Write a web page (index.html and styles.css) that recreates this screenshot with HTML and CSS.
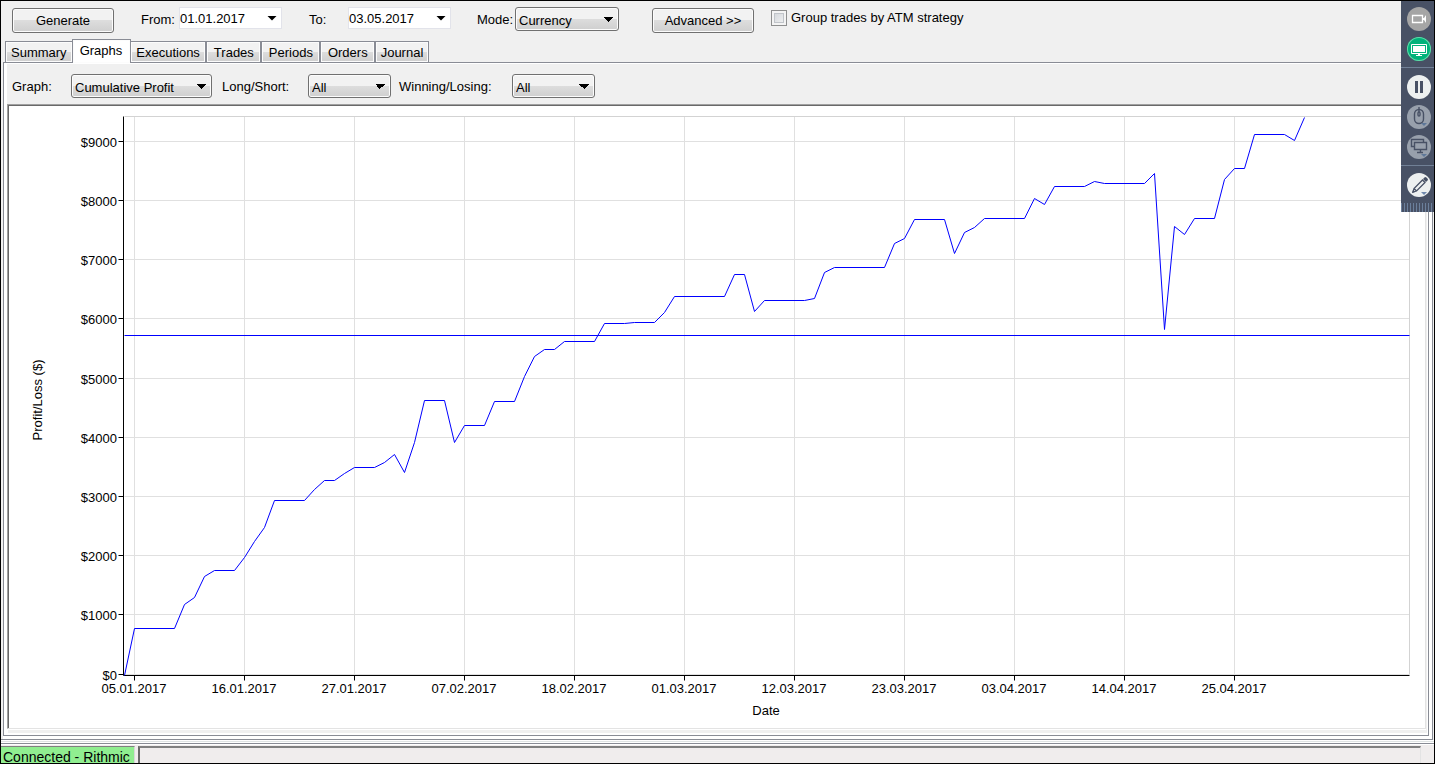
FILE: index.html
```html
<!DOCTYPE html>
<html lang="en">

<head>
  <meta charset="UTF-8">
  <meta name="viewport" content="width=device-width, initial-scale=1.0">
  <title>Account Performance</title>
  <link rel="stylesheet" href="styles.css">
</head>

<body>
  <div class="window">
    <form class="toolbar">
      <button type="button" class="btn">Generate</button>
      <label class="from-label" for="from">From:</label>
      <div class="date">
        <input type="text" id="from" value="01.01.2017">
        <button type="button" class="drop" aria-label="Open from date"></button>
      </div>
      <label class="to-label" for="to">To:</label>
      <div class="date">
        <input type="text" id="to" value="03.05.2017">
        <button type="button" class="drop" aria-label="Open to date"></button>
      </div>
      <label class="mode-label" for="mode">Mode:</label>
      <select id="mode" class="select-mode">
        <option>Currency</option>
        <option>Percent</option>
        <option>Points</option>
      </select>
      <button type="button" class="btn advanced">Advanced &gt;&gt;</button>
      <label class="check"><input type="checkbox"> Group trades by ATM strategy</label>
    </form>

    <nav class="tabs">
      <button type="button" class="tab">Summary</button>
      <button type="button" class="tab active">Graphs</button>
      <button type="button" class="tab">Executions</button>
      <button type="button" class="tab wide">Trades</button>
      <button type="button" class="tab wide">Periods</button>
      <button type="button" class="tab wide">Orders</button>
      <button type="button" class="tab">Journal</button>
    </nav>

    <main class="report">
      <div class="page">
        <form class="filters">
          <label class="graph-label" for="graph">Graph:</label>
          <select id="graph" class="select-graph">
            <option>Cumulative Profit</option>
            <option>Drawdown</option>
          </select>
          <label class="side-label" for="side">Long/Short:</label>
          <select id="side" class="select-all">
            <option>All</option>
            <option>Long</option>
            <option>Short</option>
          </select>
          <label class="result-label" for="result">Winning/Losing:</label>
          <select id="result" class="select-all">
            <option>All</option>
            <option>Winning</option>
            <option>Losing</option>
          </select>
        </form>

        <div class="panel">
          <svg class="chart" viewBox="9 106 1416 622" role="img" aria-label="Cumulative profit by date">
            <g transform="translate(.5 .5)">
              <path class="grid" d="M124 141H1409M124 200H1409M124 259H1409M124 318H1409M124 378H1409M124 437H1409M124 496H1409M124 555H1409M124 614H1409M124 674H1409" />
              <path class="grid" d="M134 116V674M244 116V674M354 116V674M464 116V674M574 116V674M684 116V674M794 116V674M904 116V674M1014 116V674M1124 116V674M1234 116V674" />
              <path class="frame" d="M124 116H1409V674" />
              <path class="axis" d="M123 116V675H1409" />
              <path class="axis" d="M118 141H123M118 200H123M118 259H123M118 318H123M118 378H123M118 437H123M118 496H123M118 555H123M118 614H123M118 674H123" />
              <path class="axis" d="M134 675V680M244 675V680M354 675V680M464 675V680M574 675V680M684 675V680M794 675V680M904 675V680M1014 675V680M1124 675V680M1234 675V680" />
              <path class="profit" d="M124 335H1409" />
              <polyline class="profit" points="124,675 134,628 174,628 184,604 194,597 204,576 214,570 234,570 244,557 254,541 264,527 274,500 304,500 314,489 324,480 334,480 344,473 354,467 374,467 384,462 394,454 404,472 414,442 424,400 444,400 454,442 464,425 484,425 494,401 514,401 524,376 534,356 544,349 554,349 564,341 594,341 604,323 624,323 634,322 654,322 664,312 674,296 724,296 734,274 744,274 754,311 764,300 804,300 814,298 824,272 834,267 884,267 894,243 904,238 914,219 944,219 954,253 964,232 974,227 984,218 1024,218 1034,198 1044,204 1054,186 1084,186 1094,181 1104,183 1144,183 1154,173 1164,329 1174,226 1184,234 1194,218 1214,218 1224,179 1234,168 1244,168 1254,134 1284,134 1294,140 1304,117" />
            </g>
            <g class="y-labels">
              <text x="117" y="147">$9000</text>
              <text x="117" y="206">$8000</text>
              <text x="117" y="265">$7000</text>
              <text x="117" y="324">$6000</text>
              <text x="117" y="384">$5000</text>
              <text x="117" y="443">$4000</text>
              <text x="117" y="502">$3000</text>
              <text x="117" y="561">$2000</text>
              <text x="117" y="620">$1000</text>
              <text x="117" y="680">$0</text>
            </g>
            <g class="x-labels">
              <text x="134" y="693">05.01.2017</text>
              <text x="244" y="693">16.01.2017</text>
              <text x="354" y="693">27.01.2017</text>
              <text x="464" y="693">07.02.2017</text>
              <text x="574" y="693">18.02.2017</text>
              <text x="684" y="693">01.03.2017</text>
              <text x="794" y="693">12.03.2017</text>
              <text x="904" y="693">23.03.2017</text>
              <text x="1014" y="693">03.04.2017</text>
              <text x="1124" y="693">14.04.2017</text>
              <text x="1234" y="693">25.04.2017</text>
              <text x="766" y="715">Date</text>
              <text transform="translate(42 400) rotate(-90)">Profit/Loss ($)</text>
            </g>
          </svg>
        </div>
      </div>
    </main>

    <footer class="status">
      <span class="connected">Connected - Rithmic</span>
      <span class="message"></span>
    </footer>

    <!-- floating share bar -->
    <aside class="share">
      <button type="button" class="round muted" aria-label="Camera">
        <svg viewBox="0 0 24 24"><path d="M5.500 8.500H15.500V15.500H5.500Z" fill="none" stroke="#fff" stroke-width="1.300" /><path d="M16 11L17 11L19 8V16L17 13L16 13Z" fill="#fff" /></svg>
      </button>
      <button type="button" class="round screen" aria-label="Share screen">
        <svg viewBox="0 0 24 24"><path d="M4.500 7.500H19.500V16.500H4.500Z" fill="none" stroke="#fff" /><path d="M6 9H18V15H6ZM11 17H13V18H15V19H9V18H11Z" fill="#fff" /></svg>
      </button>
      <hr>
      <button type="button" class="round light" aria-label="Pause">
        <svg viewBox="0 0 24 24"><path d="M8 6H11V18H8ZM13 6H16V18H13Z" fill="#485165" /></svg>
      </button>
      <button type="button" class="round dim" aria-label="Mouse control">
        <svg viewBox="0 0 24 24"><g fill="none" stroke="#485165" stroke-width="1.400"><rect x="7.500" y="4.500" width="9" height="14" rx="4.500" /><path d="M12 2V7" /><rect x="11" y="7" width="2" height="4" rx="1" /></g><path d="M14 18H20L17 21Z" fill="#5f7899" /></svg>
      </button>
      <button type="button" class="round dim" aria-label="Monitors">
        <svg viewBox="0 0 24 24"><g fill="none" stroke="#485165" stroke-width="1.400"><path d="M7 11.500H4.500V4.500H16.500V7" /><path d="M7.500 7.500H19.500V14.500H7.500ZM13.500 15V17M10 17.500H16" /></g><path d="M14 19H20L17 22Z" fill="#5f7899" /></svg>
      </button>
      <hr>
      <button type="button" class="round light" aria-label="Draw">
        <svg viewBox="0 0 24 24"><path d="M6 19L7 15.500L15.500 7L18 9.500L9.500 18ZM7 15.500L9.500 18" fill="none" stroke="#485165" stroke-width="1.300" /><path d="M16 6L18 4Q19 4 20 5Q21 6 21 7L19 9ZM5 20L6 17L8 19Z" fill="#485165" /><path d="M14 19H20L17 22Z" fill="#7089ad" /></svg>
      </button>
      <div class="grip"></div>
    </aside>
  </div>
</body>

</html>
```
FILE: styles.css
```css
* {
  box-sizing: border-box;
}

body {
  margin: 0;
  font-family: "Liberation Sans", Arial, sans-serif;
  font-size: 13px;
  color: #000;
}

button,
input,
select {
  font: inherit;
  color: inherit;
}

.window {
  position: relative;
  display: flex;
  flex-direction: column;
  min-height: 100vh;
  border: 1px solid #000;
  background: #f0f0f0;
}

/* top row */
.toolbar {
  display: flex;
  align-items: flex-start;
  height: 38px;
  padding: 6px 11px 0;
  line-height: 26px;
}

.btn {
  width: 102px;
  height: 25px;
  margin-top: 1px;
  padding: 0;
  border: 1px solid #707070;
  border-radius: 3px;
  line-height: 23px;
  background: linear-gradient(#f2f2f2 50%, #dddddd 50%, #cfcfcf);
  box-shadow: inset 0 0 0 1px #fcfcfc;
}

.from-label,
.to-label {
  margin-left: 27px;
}

.from-label {
  width: 38px;
}

.to-label {
  width: 39px;
}

.mode-label {
  width: 38px;
  margin-left: 26px;
}

.date {
  display: flex;
  width: 103px;
  height: 22px;
  border: 1px solid #e2e3ea;
  background: #fff;
}

.date input {
  flex: 1;
  min-width: 0;
  padding: 1px 0 0;
  border: 0;
  background: none;
}

.drop {
  width: 18px;
  padding: 0;
  border: 0;
  background: none;
}

.drop::before {
  content: "";
  display: block;
  margin: 0 auto;
  width: 10px;
  height: 5px;
  background: #000;
  clip-path: polygon(0 0, 100% 0, 50% 100%);
}

select {
  height: 24px;
  padding: 0 3px 2px;
  appearance: none;
  border: 1px solid #707070;
  border-radius: 3px;
  box-shadow: inset 0 0 0 1px #fcfcfc;
  background:
    conic-gradient(from -45deg at 50% 100%, #000 90deg, transparent 0) right 5px top 9px / 10px 5px no-repeat,
    linear-gradient(#f2f2f2 50%, #dddddd 50%, #cfcfcf);
}

.select-mode {
  width: 104px;
}

.advanced {
  margin-left: 33px;
}

.check {
  display: flex;
  gap: 4px;
  margin-left: 17px;
  line-height: 22px;
}

.check input {
  appearance: none;
  width: 16px;
  height: 16px;
  margin: 3px 0 0;
  border: 1px solid #8e8f8f;
  background: linear-gradient(135deg, #cdd1d6, #f6f6f6);
  box-shadow: inset 0 0 0 2px #f4f4f4, inset 0 0 0 3px #c0c4c9;
}

/* tabs */
.tabs {
  display: flex;
  align-items: flex-end;
  height: 23px;
  padding-left: 4px;
}

.tab {
  height: 21px;
  padding: 0 5px;
  border: 1px solid #898c95;
  border-bottom: 0;
  background: linear-gradient(#f2f2f2 50%, #dddddd 50%, #cfcfcf);
  box-shadow: inset 0 0 0 1px #fcfcfc;
}

.tab.wide {
  padding: 0 6px 0 7px;
}

.tab.active {
  position: relative;
  height: 24px;
  margin: 0 -1px -1px;
  padding: 0 8px 2px 7px;
  background: #fff;
}

.report {
  flex: 1;
  display: flex;
  margin-right: 1px;
  padding: 0 3px 3px 2px;
  border: solid #898c95;
  border-width: 0 1px 1px 0;
  background: linear-gradient(90deg, #f0f0f0 2px, #fff 2px);
}

.page {
  flex: 1;
  padding: 1px 1px 2px 3px;
  border: 1px solid #898c95;
  background: #fff;
}

.filters {
  display: flex;
  height: 40px;
  padding: 10px 5px 0;
  line-height: 26px;
  background: #f0f0f0;
}

.graph-label {
  width: 59px;
}

.select-graph {
  width: 141px;
}

.side-label {
  width: 86px;
  margin-left: 10px;
}

.result-label {
  width: 113px;
  margin-left: 8px;
}

.select-all {
  width: 83px;
}

.panel {
  margin-right: 1px;
  border: 1px solid #e3e3e3;
  border-top-color: #a0a0a0;
  border-left-color: #a0a0a0;
  padding: 1px 0 0 1px;
  background: linear-gradient(#696969 0 0) 0 0 / 100% 1px no-repeat, linear-gradient(#696969 0 0) 0 0 / 1px 100% no-repeat;
  box-shadow: 0 1px #fff, 1px 4px #f0f0f0;
}

/* chart */
.chart {
  display: block;
  width: 100%;
}

.chart path,
.chart polyline {
  fill: none;
}

.grid {
  stroke: #e0e0e0;
}

.frame {
  stroke: #d3d3d3;
}

.axis {
  stroke: #000;
}

.chart .profit {
  stroke: #00f;
}

.y-labels {
  text-anchor: end;
}

.x-labels {
  text-anchor: middle;
}

/* status bar */
.status {
  display: flex;
  gap: 3px;
  height: 23px;
  padding: 6px 13px 0 0;
  font-size: 14px;
  line-height: 20px;
  background: linear-gradient(#fff 1px, #dfe3e3 1px 2px, #fff 2px 3px, #898c95 3px 4px, #fff 4px 5px, #f0eded 5px);
}

.connected,
.message {
  height: 17px;
  border-top: 2px solid #808080;
}

.connected {
  padding: 0 4px 0 2px;
  border-right: 1px solid #d8d8d8;
  border-top-width: 1px;
  background: #90ee90;
}

.message {
  flex: 1;
  border-left: 2px solid #696969;
  border-right: 1px solid #e3e3e3;
}

/* share bar */
.share {
  position: absolute;
  top: 0;
  right: 0;
  display: flex;
  flex-direction: column;
  align-items: center;
  gap: 6px;
  width: 33px;
  padding: 6px 0 0 3px;
  background: #485165;
}

.share hr {
  align-self: stretch;
  height: 1px;
  margin: 0 0 1px -3px;
  border: 0;
  background: #718096;
}

.round {
  width: 24px;
  height: 24px;
  padding: 0;
  border: 0;
  border-radius: 50%;
}

.round svg {
  display: block;
}

.muted {
  background: #a5a5a5;
}

.screen {
  background: #00b27a;
  box-shadow: inset 0 0 0 1px #65d8a9;
}

.light {
  background: #edf0f0;
}

.dim {
  background: #98a0ac;
}

.grip {
  align-self: stretch;
  height: 9px;
  margin-left: -3px;
  background: repeating-linear-gradient(90deg, #6b7f9b 0 1px, #485165 1px 3px);
}
```
